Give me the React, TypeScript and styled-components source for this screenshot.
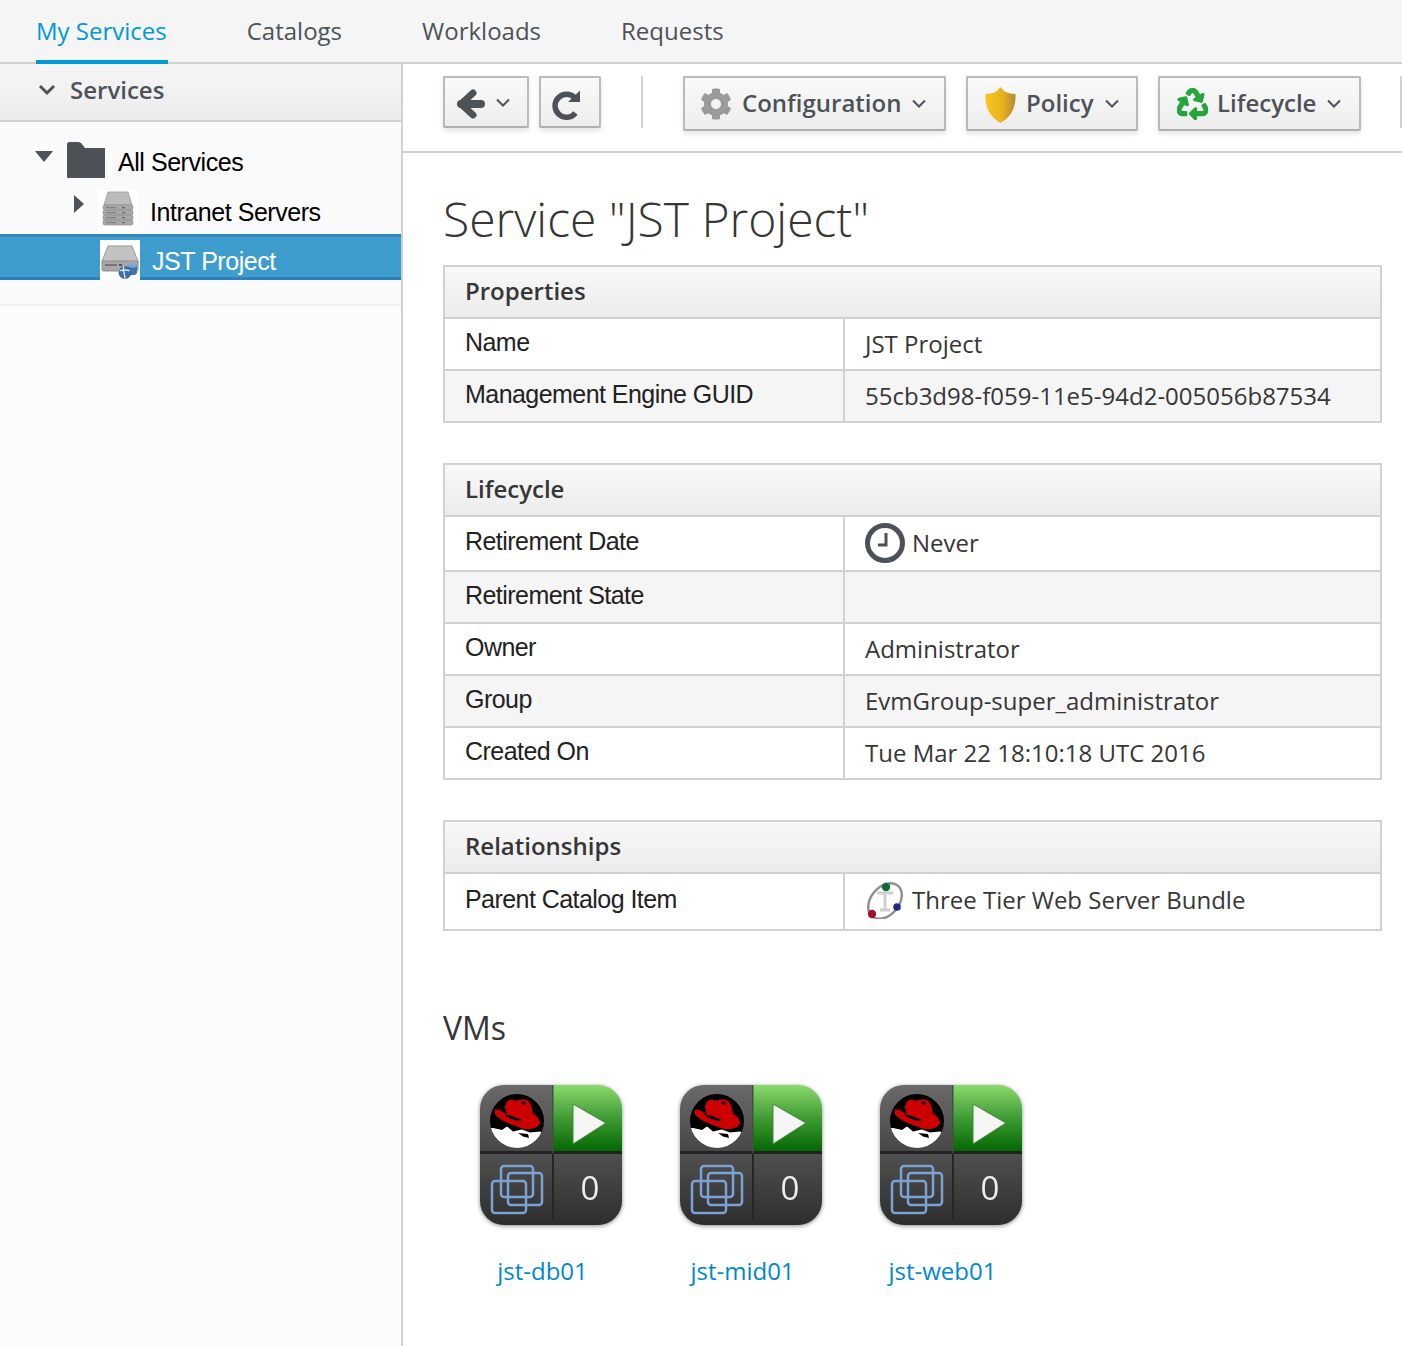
import React from "react";
import styled, { createGlobalStyle } from "styled-components";
import { FaRecycle, FaCog } from "react-icons/fa";

const Global = createGlobalStyle`
  html, body { margin: 0; padding: 0; background: #fff; }
  body { font-family: "Open Sans", "Liberation Sans", sans-serif; color: #363636; }
`;

const Page = styled.div`
  width: 1402px;
  height: 1346px;
  display: flex;
  flex-direction: column;
  overflow: hidden;
`;

const Nav = styled.nav`
  height: 62px;
  flex: none;
  display: flex;
  gap: 79px;
  padding-left: 36px;
  background: #f5f5f5;
  border-bottom: 2px solid #d1d1d1;
`;

const Tab = styled.a<{ $active?: boolean }>`
  height: 64px;
  box-sizing: border-box;
  display: flex;
  align-items: center;
  padding-bottom: 4px;
  padding-right: 1px;
  font-size: 24px;
  color: ${(p) => (p.$active ? "#0099d3" : "#4d5258")};
  ${(p) => (p.$active ? "box-shadow: inset 0 -4px 0 #0099d3;" : "")}
`;

const Body = styled.div`
  flex: 1;
  display: flex;
  min-height: 0;
`;

const Sidebar = styled.aside`
  width: 401px;
  flex: none;
  background: #fcfcfc;
  border-right: 2px solid #d1d1d1;
`;

const AccordionHead = styled.div`
  display: flex;
  align-items: center;
  padding: 0 0 6px 38px;
  box-sizing: border-box;
  gap: 14px;
  height: 58px;
  background: linear-gradient(#f6f6f6, #ececec);
  border-bottom: 2px solid #d1d1d1;
  font-size: 24px;
  font-weight: 600;
  color: #4d5258;
`;

const AccordionChevron = styled.svg`
  flex: none;
  margin-top: 1px;
`;

const Tree = styled.div`
  background: #fafafa;
  height: 184px;
  padding-top: 15px;
  box-sizing: border-box;
  border-bottom: 2px solid #f1f1f1;
`;

const TreeRow = styled.div<{ $indent: number; $selected?: boolean; $h?: number; $pt?: number }>`
  display: flex;
  align-items: center;
  height: ${(p) => p.$h ?? 50}px;
  padding-top: ${(p) => p.$pt ?? 0}px;
  padding-left: ${(p) => p.$indent}px;
  font-family: "Liberation Sans", Arial, sans-serif;
  font-size: 25px;
  letter-spacing: -0.45px;
  color: ${(p) => (p.$selected ? "#fff" : "#000")};
  background: ${(p) => (p.$selected ? "#3f9dcd" : "transparent")};
  border-top: ${(p) => (p.$selected ? "3px solid #2e89bd" : "0")};
  border-bottom: ${(p) => (p.$selected ? "3px solid #2e7fb8" : "0")};
  box-sizing: border-box;
`;

const Caret = styled.svg<{ $up: number }>`
  flex: none;
  display: block;
  margin-bottom: ${(p) => p.$up}px;
  filter: blur(0.4px);
`;

const Folder = styled.svg`
  flex: none;
  margin-bottom: 4px;
`;

const IconTile = styled.span<{ $up?: number }>`
  flex: none;
  display: block;
  width: 40px;
  height: 40px;
  background: #fff;
  margin-bottom: ${(p) => p.$up ?? 0}px;
`;

const Gap = styled.span<{ $w: number }>`
  flex: none;
  display: block;
  width: ${(p) => p.$w}px;
`;

const Main = styled.main`
  flex: 1;
  min-width: 0;
  display: flex;
  flex-direction: column;
`;

const Toolbar = styled.div`
  height: 89px;
  flex: none;
  box-sizing: border-box;
  border-bottom: 2px solid #d1d1d1;
  padding: 12px 0 0 40px;
  display: flex;
  align-items: flex-start;
`;

const ToolButton = styled.button<{ $w: number; $h?: number; $ml?: number }>`
  width: ${(p) => p.$w}px;
  height: ${(p) => p.$h ?? 55}px;
  margin-left: ${(p) => p.$ml ?? 0}px;
  flex: none;
  box-sizing: border-box;
  border: 2px solid #bbb;
  border-bottom-color: #b0b0b0;
  border-radius: 2px;
  background: linear-gradient(#fafafa, #ededed);
  box-shadow: 0 3px 5px rgba(0, 0, 0, 0.1);
  display: flex;
  align-items: center;
  padding: 0;
  font-family: "Open Sans", sans-serif;
  font-size: 24px;
  font-weight: 600;
  color: #4d5258;
`;

const ToolDivider = styled.span<{ $ml: number }>`
  flex: none;
  width: 2px;
  height: 52px;
  background: #d1d1d1;
  margin-left: ${(p) => p.$ml}px;
`;

const Label = styled.span<{ $ml: number }>`
  margin-left: ${(p) => p.$ml}px;
  padding-bottom: 3px;
`;

const GlyphSvg = styled.svg<{ $ml: number; $mt?: number }>`
  flex: none;
  margin-left: ${(p) => p.$ml}px;
  margin-top: ${(p) => p.$mt ?? 0}px;
`;

const GearGlyph = styled(FaCog)`
  flex: none;
  width: 32px;
  height: 32px;
  margin-left: 15px;
  color: #9a9a9a;
  filter: blur(0.7px);
`;

const RecycleGlyph = styled(FaRecycle)`
  flex: none;
  width: 31px;
  height: 32px;
  margin-left: 17px;
  color: #25a53a;
  stroke: #25a53a;
  stroke-width: 22px;
  filter: blur(0.6px);
`;

const Content = styled.div`
  padding: 0 20px 0 40px;
`;

const Title = styled.h1`
  margin: 35px 0 15px;
  font-size: 48px;
  line-height: 62px;
  font-weight: 300;
  color: #363636;
`;

const Table = styled.table`
  width: 939px;
  border-collapse: collapse;
  table-layout: fixed;
  margin-bottom: 40px;
`;

const Head = styled.th`
  height: 52px;
  box-sizing: border-box;
  padding: 0 0 3px 20px;
  text-align: left;
  border: 2px solid #d1d1d1;
  background: linear-gradient(#f8f8f8, #ececec);
  font-size: 24px;
  font-weight: 600;
  color: #363636;
`;

const Row = styled.tr<{ $odd?: boolean }>`
  background: ${(p) => (p.$odd ? "#f5f5f5" : "#fff")};
`;

const KeyCol = styled.col`
  width: 400px;
`;

const KeyCell = styled.td<{ $h?: number }>`
  height: ${(p) => p.$h ?? 52}px;
  box-sizing: border-box;
  padding: 0 0 4px 20px;
  border: 2px solid #d1d1d1;
  font-family: "Liberation Sans", Arial, sans-serif;
  font-size: 25px;
  letter-spacing: -0.55px;
  color: #222;
`;

const ValueCell = styled.td<{ $pb?: number }>`
  box-sizing: border-box;
  padding: 0 0 ${(p) => p.$pb ?? 2}px 20px;
  border: 2px solid #d1d1d1;
  font-size: 24px;
  color: #363636;
`;

const ValueInner = styled.div`
  display: flex;
  align-items: center;
  gap: 7px;
`;

const SectionTitle = styled.h2`
  margin: 75px 0 35px;
  font-size: 32px;
  line-height: 44px;
  font-weight: 400;
  color: #363636;
`;

const VmGrid = styled.div`
  display: flex;
  padding-left: 37px;
  gap: 58px;
`;

const Vm = styled.a`
  width: 142px;
  display: flex;
  flex-direction: column;
  align-items: center;
  gap: 26px;
  color: #0088ce;
  font-size: 24px;
  line-height: 36px;
  white-space: nowrap;
`;

const VmName = styled.span`
  margin-right: 17px;
`;

const QuadSvg = styled.svg`
  display: block;
  filter: drop-shadow(0 1px 2px rgba(0, 0, 0, 0.45));
`;

const InlineIcon = styled.svg`
  flex: none;
`;

const Chevron = ({ ml = 11 }: { ml?: number }) => (
  <GlyphSvg $ml={ml} width="14" height="9" viewBox="0 0 14 9">
    <path d="M1 1.500l6 6 6-6" fill="none" stroke="#4d5258" strokeWidth="2" />
  </GlyphSvg>
);

const BackArrow = () => (
  <GlyphSvg $ml={11} $mt={4} width="30" height="30" viewBox="0 0 30 30" fill="none" stroke="#4d5258" strokeLinecap="round" strokeLinejoin="round">
    <path d="M17 4L5 15l12 11" strokeWidth="7" />
    <path d="M5 15h20" strokeWidth="8" />
  </GlyphSvg>
);

const RefreshGlyph = () => (
  <GlyphSvg $ml={11} $mt={6} width="30" height="30" viewBox="0 0 30 30">
    <path d="M23.500 23A11.500 11.500 0 1 1 23 8" fill="none" stroke="#4d5258" strokeWidth="5.500" />
    <path d="M28 .5V12H16z" fill="#4d5258" />
  </GlyphSvg>
);

const FolderIcon = () => (
  <Folder width="38" height="36" viewBox="0 0 38 36">
    <path d="M0 2.500A2.500 2.500 0 0 1 2.500 0h9a4 4 0 0 1 3 1.500L18 6h20v30H1a1 1 0 0 1-1-1z" fill="#4d5258" />
  </Folder>
);

const ServerStack = () => (
  <IconTile $up={4}>
    <svg width="40" height="40" viewBox="0 0 40 40">
      <path d="M10 2h20l4 13H6z" fill="#bcbcbc" stroke="#a5a5a5" />
      {[15, 20, 25, 30].map((y) => (
        <g key={y}>
          <rect x="5" y={y} width="30" height="5" rx="2" fill="#a8a8a8" stroke="#8f8f8f" strokeWidth=".7" />
          <rect x="8" y={y + 2} width="10" height="1.200" fill="#808080" />
          <rect x="24" y={y + 2} width="3" height="1.200" fill="#666" />
        </g>
      ))}
    </svg>
  </IconTile>
);

const ServiceIcon = () => (
  <IconTile $up={2}>
    <svg width="40" height="40" viewBox="0 0 40 40">
      <path d="M8 6h24l6 15v2H2v-2z" fill="#c2c2c2" stroke="#9a9a9a" />
      <rect x="2" y="21" width="36" height="10" rx="1.500" fill="#a8a8a8" stroke="#8c8c8c" />
      <rect x="5" y="24" width="12" height="2" fill="#757575" />
      <rect x="19" y="24" width="3" height="2" fill="#555" />
      <rect x="28" y="24" width="9" height="11" rx="3" fill="#3f74ad" />
      <ellipse cx="32.500" cy="25.500" rx="4.500" ry="2" fill="#7ea6d0" />
      <circle cx="25" cy="32.500" r="6.500" fill="#3a6ea8" />
      <path d="M19.500 30c3 2 7-2 10 1M24 26.500c-2 3 1 8 1 12" stroke="#dbe7f3" strokeWidth="1.400" fill="none" />
    </svg>
  </IconTile>
);

const ShieldIcon = () => (
  <GlyphSvg $ml={16} $mt={2} width="33" height="38" viewBox="0 0 33 38">
    <defs>
      <linearGradient id="shieldFill" x1="0" x2="1" y1="0" y2="0">
        <stop offset="0" stopColor="#f8c51d" />
        <stop offset=".55" stopColor="#ebb21c" />
        <stop offset="1" stopColor="#b08a35" />
      </linearGradient>
    </defs>
    <path d="M16.500 1l4 4.500c3 1.500 7 2.500 11 2.500 .5 12-3 22-15 29C4.500 30 1 20 1.500 8c4 0 8-1 11-2.500z" fill="url(#shieldFill)" />
  </GlyphSvg>
);

const ClockIcon = () => (
  <InlineIcon width="40" height="40" viewBox="0 0 40 40">
    <circle cx="20" cy="20" r="17.500" fill="none" stroke="#4d5258" strokeWidth="5" />
    <path d="M21 10v12h-8" fill="none" stroke="#4d5258" strokeWidth="3" />
  </InlineIcon>
);

const BundleIcon = () => (
  <InlineIcon width="40" height="38" viewBox="0 0 40 38">
    <ellipse cx="20" cy="20" rx="20" ry="14" transform="rotate(-50 20 20)" fill="none" stroke="#8d8d8d" strokeWidth="2.400" />
    <path d="M12 12h16M20 12v17M15 29h10" stroke="#cfcfcf" strokeWidth="3" fill="none" />
    <circle cx="21" cy="6" r="4.200" fill="#0f6b35" />
    <circle cx="32" cy="26" r="3.800" fill="#1b2a8c" />
    <circle cx="7" cy="33" r="4.200" fill="#9c1526" />
  </InlineIcon>
);

const Quadicon = ({ id }: { id: string }) => (
  <QuadSvg width="142" height="142" viewBox="0 0 142 142">
    <defs>
      <linearGradient id={`${id}-dark`} x1="0" x2="0" y1="0" y2="1">
        <stop offset="0" stopColor="#6a6a6a" />
        <stop offset="1" stopColor="#464646" />
      </linearGradient>
      <linearGradient id={`${id}-low`} x1="0" x2="0" y1="0" y2="1">
        <stop offset="0" stopColor="#505050" />
        <stop offset="1" stopColor="#2c2c2c" />
      </linearGradient>
      <linearGradient id={`${id}-green`} x1="0" x2="0" y1="0" y2="1">
        <stop offset="0" stopColor="#8cd96b" />
        <stop offset=".5" stopColor="#3d9a33" />
        <stop offset="1" stopColor="#006400" />
      </linearGradient>
      <clipPath id={`${id}-clip`}>
        <rect x="0" y="0" width="142" height="140" rx="24" />
      </clipPath>
      <clipPath id={`${id}-logo`}>
        <circle cx="37" cy="36" r="27" />
      </clipPath>
    </defs>
    <g clipPath={`url(#${id}-clip)`}>
      <rect x="0" y="0" width="73" height="68" fill={`url(#${id}-dark)`} />
      <rect x="73" y="0" width="69" height="68" fill={`url(#${id}-green)`} />
      <rect x="0" y="68" width="142" height="74" fill={`url(#${id}-low)`} />
      <rect x="0" y="66" width="142" height="3" fill="#222" />
      <rect x="72" y="69" width="2" height="66" fill="#262626" />
      <rect x="72" y="0" width="1.500" height="68" fill="#4a4a4a" />
    </g>
    <circle cx="37" cy="36" r="27" fill="#000" />
    <g clipPath={`url(#${id}-logo)`}>
      <path d="M8 43h5l9 2 5-3.500 6 5 9-2 8 3 10-1 6 3v20H8z" fill="#fff" />
      <path d="M38 48l10 1 1 4-6-1.500z" fill="#000" />
      <path d="M25 23c0-3 1-6 3-7 2-2 5-1 7 0 3-1 9-3 12-1 3 2 4 5 5 8l1 6c3 1 6 4 7 8 0 4-5 7-10 7-5 1-10-1-14-3-6-2-12-4-17-8-3-2-6-5-4-8 2-1 5 0 8 2 1 1 3 2 4 1z" fill="#cc0000" />
      <path d="M24 29c6 1 12 3 18 6l-3 1c-6-1-11-3-15-7z" fill="#000" />
      <path d="M41 17c2-1 4-1 5 0l-1 3c-2 0-3-1-4-3z" fill="#2a0000" />
    </g>
    <path d="M93 19l33 19-33 21z" fill="#f5f5f5" stroke="#3b8a2f" strokeWidth="1" />
    <g fill="none" stroke="#7ba2d3" strokeWidth="2.500">
      <rect x="21" y="81" width="32" height="31" rx="3" />
      <rect x="28" y="88" width="34" height="32" rx="3" />
      <rect x="12" y="96" width="34" height="32" rx="3" />
    </g>
    <text x="110" y="115" textAnchor="middle" fontFamily="Open Sans, sans-serif" fontSize="33" fill="#eeeeee">0</text>
  </QuadSvg>
);

const vms = ["jst-db01", "jst-mid01", "jst-web01"];

export default function App() {
  return (
    <Page>
      <Global />
      <Nav>
        <Tab $active>My Services</Tab>
        <Tab>Catalogs</Tab>
        <Tab>Workloads</Tab>
        <Tab>Requests</Tab>
      </Nav>
      <Body>
        <Sidebar>
          <AccordionHead>
            <AccordionChevron width="18" height="12" viewBox="0 0 18 12">
              <path d="M2 2l7 7 7-7" fill="none" stroke="#4d5258" strokeWidth="3" />
            </AccordionChevron>
            Services
          </AccordionHead>
          <Tree>
            <TreeRow $indent={35}>
              <Caret $up={12} width="18" height="11" viewBox="0 0 18 11">
                <path d="M0 0h18l-9 11z" fill="#4d5258" />
              </Caret>
              <Gap $w={14} />
              <FolderIcon />
              <Gap $w={13} />
              All Services
            </TreeRow>
            <TreeRow $indent={74} $h={47} $pt={3}>
              <Caret $up={16} width="10" height="18" viewBox="0 0 10 18">
                <path d="M0 0l10 9-10 9z" fill="#4d5258" />
              </Caret>
              <Gap $w={14} />
              <ServerStack />
              <Gap $w={12} />
              Intranet Servers
            </TreeRow>
            <TreeRow $indent={100} $selected $h={46} $pt={8}>
              <ServiceIcon />
              <Gap $w={12} />
              JST Project
            </TreeRow>
          </Tree>
        </Sidebar>
        <Main>
          <Toolbar>
            <ToolButton $w={86} $h={52}>
              <BackArrow />
              <Chevron ml={10} />
            </ToolButton>
            <ToolButton $w={62} $h={52} $ml={10}>
              <RefreshGlyph />
            </ToolButton>
            <ToolDivider $ml={40} />
            <ToolButton $w={263} $ml={40}>
              <GearGlyph />
              <Label $ml={10}>Configuration</Label>
              <Chevron />
            </ToolButton>
            <ToolButton $w={172} $ml={20}>
              <ShieldIcon />
              <Label $ml={9}>Policy</Label>
              <Chevron />
            </ToolButton>
            <ToolButton $w={203} $ml={20}>
              <RecycleGlyph />
              <Label $ml={9}>Lifecycle</Label>
              <Chevron />
            </ToolButton>
            <ToolDivider $ml={39} />
          </Toolbar>
          <Content>
            <Title>Service "JST Project"</Title>
            <Table>
              <colgroup>
                <KeyCol />
                <col />
              </colgroup>
              <thead>
                <tr><Head colSpan={2}>Properties</Head></tr>
              </thead>
              <tbody>
                <Row><KeyCell>Name</KeyCell><ValueCell>JST Project</ValueCell></Row>
                <Row $odd><KeyCell>Management Engine GUID</KeyCell><ValueCell>55cb3d98-f059-11e5-94d2-005056b87534</ValueCell></Row>
              </tbody>
            </Table>
            <Table>
              <colgroup>
                <KeyCol />
                <col />
              </colgroup>
              <thead>
                <tr><Head colSpan={2}>Lifecycle</Head></tr>
              </thead>
              <tbody>
                <Row>
                  <KeyCell $h={55}>Retirement Date</KeyCell>
                  <ValueCell><ValueInner><ClockIcon />Never</ValueInner></ValueCell>
                </Row>
                <Row $odd><KeyCell>Retirement State</KeyCell><ValueCell /></Row>
                <Row><KeyCell>Owner</KeyCell><ValueCell>Administrator</ValueCell></Row>
                <Row $odd><KeyCell>Group</KeyCell><ValueCell>EvmGroup-super_administrator</ValueCell></Row>
                <Row><KeyCell>Created On</KeyCell><ValueCell>Tue Mar 22 18:10:18 UTC 2016</ValueCell></Row>
              </tbody>
            </Table>
            <Table>
              <colgroup>
                <KeyCol />
                <col />
              </colgroup>
              <thead>
                <tr><Head colSpan={2}>Relationships</Head></tr>
              </thead>
              <tbody>
                <Row>
                  <KeyCell $h={57}>Parent Catalog Item</KeyCell>
                  <ValueCell $pb={4}><ValueInner><BundleIcon />Three Tier Web Server Bundle</ValueInner></ValueCell>
                </Row>
              </tbody>
            </Table>
            <SectionTitle>VMs</SectionTitle>
            <VmGrid>
              {vms.map((n) => (
                <Vm key={n}>
                  <Quadicon id={n} />
                  <VmName>{n}</VmName>
                </Vm>
              ))}
            </VmGrid>
          </Content>
        </Main>
      </Body>
    </Page>
  );
}
